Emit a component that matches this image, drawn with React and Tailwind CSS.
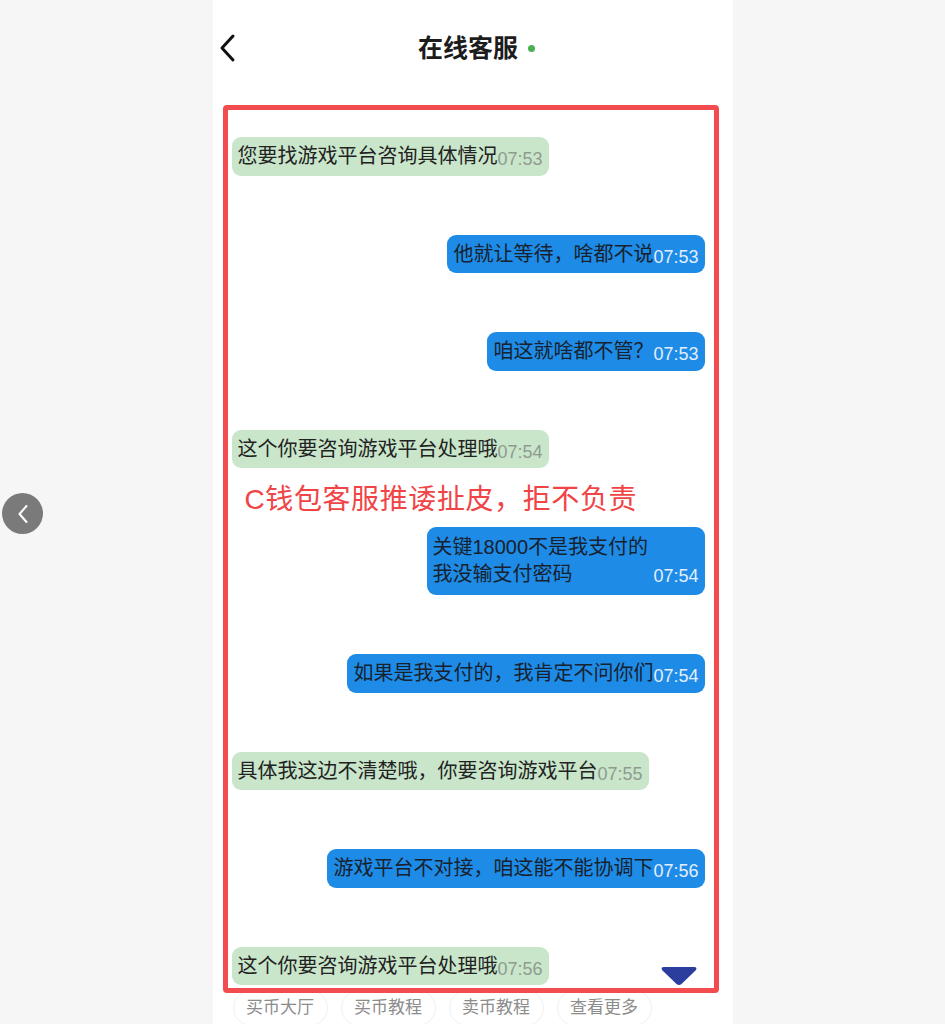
import React from "react";

const FONT = { fontFamily: '"Liberation Sans", "Noto Sans CJK SC", "Noto Sans", sans-serif' };

const messages = [
  { side: "left", text: "您要找游戏平台咨询具体情况", time: "07:53" },
  { side: "right", text: "他就让等待，啥都不说", time: "07:53" },
  { side: "right", text: "咱这就啥都不管？", time: "07:53" },
  { side: "left", text: "这个你要咨询游戏平台处理哦", time: "07:54" },
  { side: "right", lines: ["关键18000不是我支付的", "我没输支付密码"], time: "07:54" },
  { side: "right", text: "如果是我支付的，我肯定不问你们", time: "07:54" },
  { side: "left", text: "具体我这边不清楚哦，你要咨询游戏平台", time: "07:55" },
  { side: "right", text: "游戏平台不对接，咱这能不能协调下", time: "07:56" },
  { side: "left", text: "这个你要咨询游戏平台处理哦", time: "07:56" },
];

function Bubble({ m }) {
  const mine = m.side === "right";
  const box = mine
    ? "bg-[#1e8be6] text-[#17222e]"
    : "bg-[#c9e6ca] text-[#222]";
  const timeColor = mine ? "text-[#e3efff]" : "text-[#8f9b8f]";

  if (m.lines) {
    return (
      <div className={`w-[278px] rounded-[9px] px-[6px] py-[6px] ${box}`}>
        <div className="text-[20px] leading-[28px]">{m.lines[0]}</div>
        <div className="flex items-baseline justify-between">
          <span className="text-[20px] leading-[27px]">{m.lines[1]}</span>
          <span className={`relative top-[1px] text-[18px] leading-[27px] ${timeColor}`}>{m.time}</span>
        </div>
      </div>
    );
  }

  return (
    <div className={`flex h-[38.5px] items-baseline rounded-[9px] px-[6px] pt-[6px] whitespace-nowrap ${box}`}>
      <span className="text-[20px] leading-[26px]">{m.text}</span>
      <span className={`relative top-[2px] text-[18px] leading-[26px] ${timeColor}`}>{m.time}</span>
    </div>
  );
}

export default function App() {
  return (
    <div className="relative h-[1024px] overflow-hidden bg-[#f6f6f6]" style={FONT}>
      {/* floating previous-page button */}
      <button className="absolute left-[2px] top-[493px] flex h-[41px] w-[41px] items-center justify-center rounded-full bg-[#7a7a7a]">
        <svg width="12" height="20" viewBox="0 0 12 20" fill="none">
          <path d="M9.5 2 L2.5 10 L9.5 18" stroke="#fff" strokeWidth="2" strokeLinecap="round" strokeLinejoin="round" />
        </svg>
      </button>

      <div className="relative mx-auto flex h-[1024px] w-[520px] flex-col bg-white">
        {/* header */}
        <header className="grid h-[96px] shrink-0 grid-cols-[1fr_auto_1fr] items-center">
          <div className="pl-[6px]">
            <svg width="17" height="30" viewBox="0 0 17 30" fill="none">
              <path d="M14 3 L3 15 L14 27" stroke="#111" strokeWidth="3" strokeLinecap="round" strokeLinejoin="round" />
            </svg>
          </div>
          <div className="flex items-center gap-[10px] pl-[8px]">
            <span className="text-[25px] font-bold leading-none text-[#1c1c1c]">在线客服</span>
            <span className="h-[7px] w-[7px] rounded-full bg-[#4cb050]" />
          </div>
          <div />
        </header>

        {/* conversation */}
        <div className="h-[894px] shrink-0 overflow-hidden pl-[19px] pr-[28px] pt-[41px]">
          <div className="flex flex-col gap-[59px]">
            {messages.map((m, i) => (
              <div key={i} className={`flex ${m.side === "right" ? "justify-end" : "justify-start"}`}>
                <Bubble m={m} />
              </div>
            ))}
          </div>
        </div>

        {/* quick links */}
        <div className="flex shrink-0 gap-[13px] pl-[20px]">
          {["买币大厅", "买币教程", "卖币教程", "查看更多"].map((t) => (
            <div
              key={t}
              className="flex h-[36px] w-[95px] items-center justify-center rounded-full border border-[#efefef] text-[17px] text-[#8c8c8c]"
            >
              {t}
            </div>
          ))}
        </div>

        {/* red highlight frame */}
        <div className="pointer-events-none absolute left-[10px] top-[105px] h-[888px] w-[496px] rounded-[4px] border-[5px] border-[#f24c4e]" />

        {/* annotation */}
        <div className="pointer-events-none absolute left-[32px] top-[482px] text-[28px] leading-[36px] tracking-[0.6px] text-[#f04446]">
          C钱包客服推诿扯皮，拒不负责
        </div>

        {/* scroll-to-bottom arrow */}
        <svg className="absolute left-[447px] top-[966px]" width="38" height="20" viewBox="0 0 38 20">
          <path d="M4 1 H34 Q38 1 35.5 4.5 L21.5 18 Q19 20 16.5 18 L2.5 4.5 Q0 1 4 1 Z" fill="#2b3d9d" />
        </svg>
      </div>
    </div>
  );
}
